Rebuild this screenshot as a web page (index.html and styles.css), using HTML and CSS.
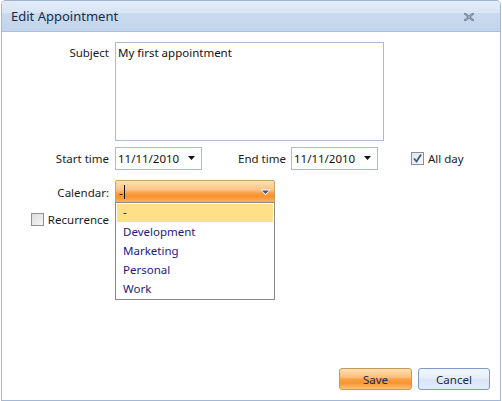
FILE: index.html
```html
<!DOCTYPE html>
<html>
<head>
<meta charset="utf-8">
<link rel="stylesheet" href="styles.css">
</head>
<body>
<div class="dialog">
  <div class="titlebar">
    <span class="title">Edit Appointment</span>
    <svg class="close" width="10" height="8" viewBox="0 0 10 8"><path d="M1.2 0.8 L8.8 7.2 M8.8 0.8 L1.2 7.2" stroke="#6d7f99" stroke-width="2.2" stroke-linecap="square"/><path d="M1.2 0.8 L8.8 7.2 M8.8 0.8 L1.2 7.2" stroke="#b4c2d6" stroke-width="0.7"/></svg>
  </div>
  <div class="form">
    <label class="lbl lbl-top">Subject</label>
    <div class="textarea">My first appointment</div>

    <label class="lbl lbl-row">Start time</label>
    <div class="row">
      <div class="date"><span>11/11/2010</span><svg width="8" height="5" viewBox="0 0 8 5"><path d="M0 0 H7 L3.5 4Z" fill="#111"/></svg></div>
      <label class="lbl2">End time</label>
      <div class="date"><span>11/11/2010</span><svg width="8" height="5" viewBox="0 0 8 5"><path d="M0 0 H7 L3.5 4Z" fill="#111"/></svg></div>
      <span class="check checked"><svg width="11" height="11" viewBox="0 0 11 11"><path d="M2 5.5 L4.5 8.5 L9 1.5" fill="none" stroke="#3b5a86" stroke-width="1.8"/></svg></span>
      <span class="chklabel">All day</span>
    </div>

    <label class="lbl lbl-cal">Calendar:</label>
    <div class="comboWrap">
      <div class="combo"><span class="val">-</span><span class="caret"></span>
        <svg class="carr" width="11" height="7" viewBox="0 0 11 7"><path d="M0.5 0.5 H10.5 L5.5 6.5Z" fill="#fff"/><path d="M2 1.5 H9 L5.5 5Z" fill="#3e5675"/></svg>
      </div>
      <ul class="list">
        <li class="sel">-</li>
        <li>Development</li>
        <li>Marketing</li>
        <li>Personal</li>
        <li>Work</li>
      </ul>
    </div>

    <div class="rec"><span class="check"></span><span class="chklabel">Recurrence</span></div>
    <div></div>
  </div>
  <div class="spacer"></div>
  <div class="buttons">
    <button class="btn save">Save</button>
    <button class="btn cancel">Cancel</button>
  </div>
</div>
</body>
</html>
```

FILE: styles.css
```css
html, body { margin: 0; padding: 0; background: #fff; }
body { font-family: "Noto Sans", "Open Sans", sans-serif; font-size: 11.5px; color: #1b1b1b; }
.dialog {
  width: 498px; height: 399px;
  margin-left: 1px;
  border: 1px solid #a2b8d6;
  border-top-color: #9fb3cf;
  border-radius: 5px 5px 0 0;
  display: flex; flex-direction: column;
  background: #fff;
}
.titlebar {
  height: 30px;
  flex: none;
  display: flex; align-items: center; justify-content: space-between;
  padding: 0 26px 0 9px;
  background: linear-gradient(#e3ecf8 0%, #d9e5f5 40%, #c9daef 42%, #c3d5ec 100%);
  border-bottom: 1px solid #a9bfdc;
  border-radius: 4px 4px 0 0;
}
.title { font-size: 13px; color: #1c2d47; line-height: 1; }
.close { display: block; margin-top: 2px; }
.form {
  display: grid;
  grid-template-columns: 107px 1fr;
  column-gap: 6px;
  padding-top: 10px;
}
.lbl { text-align: right; align-self: center; color: #1b1b1b; }
.lbl-top { align-self: start; padding-top: 3px; }
.textarea {
  height: 93px;
  border: 1px solid #aab9d4;
  padding: 2px 2px; box-sizing: content-box;
  color: #111;
  width: 263px;
}
.row { display: flex; align-items: center; margin-top: 6px; height: 23px; }
.lbl-row { margin-top: 6px; }
.date {
  height: 21px; border: 1px solid #a8bbd9;
  display: flex; align-items: center; justify-content: space-between;
  padding: 0 5px 0 2px; box-sizing: content-box;
  width: 78px; flex: none;
}
.date span { color: #111; }
.lbl2 { margin-left: 36px; width: 48px; margin-right: 5px; white-space: nowrap; }
.check {
  width: 11px; height: 11px; border: 1px solid #8c8f94;
  background: linear-gradient(135deg, #dcdcdc, #f6f6f6);
  display: inline-flex; align-items: center; justify-content: center;
  box-sizing: content-box; flex: none;
}
.check.checked { margin-left: 33px; background: linear-gradient(135deg, #e2e6ec, #f8f9fb); }
.check svg { display: block; }
.chklabel { margin-left: 4px; }
.lbl-cal { margin-top: 10px; }
.comboWrap { position: relative; margin-top: 10px; width: 160px; }
.combo {
  height: 22px; border: 1px solid #c5a46a; border-radius: 2px;
  background: linear-gradient(#fde2b0 0%, #fcc487 40%, #f9a046 55%, #f8922c 70%, #fbb66a 100%);
  display: flex; align-items: center; padding: 0 4px 0 3px; position: relative;
}
.val { color: #111; }
.caret { width: 1px; height: 14px; background: #111; margin-left: 1px; }
.carr { position: absolute; right: 3px; top: 8px; }
.list {
  position: absolute; left: 0; top: 22px; margin: 0; padding: 1px; list-style: none;
  width: 156px; border: 1px solid #8a8a8a; background: #fff;
  box-sizing: content-box; z-index: 2;
}
.list li { height: 19px; line-height: 19px; padding-left: 6px; color: #1c1a80; }
.list li.sel { background: #fee186; color: #1b1b1b; height: 18px; line-height: 16px; }
.rec { display: flex; align-items: center; justify-content: flex-end; margin-top: 9px; height: 13px; }
.spacer { flex: 1; }
.buttons { display: flex; justify-content: flex-end; gap: 6px; padding: 0 10px 10px 0; }
.btn {
  width: 73px; height: 22px; font-family: inherit; font-size: 11.5px; color: #1e2a44;
  border-radius: 3px; padding: 0; cursor: default;
}
.save {
  border: 1px solid #c59a58;
  background: linear-gradient(#fde0b3 0%, #fcc07c 40%, #f9a046 52%, #f8952f 70%, #fbc07a 100%);
}
.cancel {
  width: 72px;
  border: 1px solid #7e9ac6;
  background: linear-gradient(#f1f6fd 0%, #e6eefa 45%, #d9e5f6 55%, #e3ecf9 100%);
}
```
